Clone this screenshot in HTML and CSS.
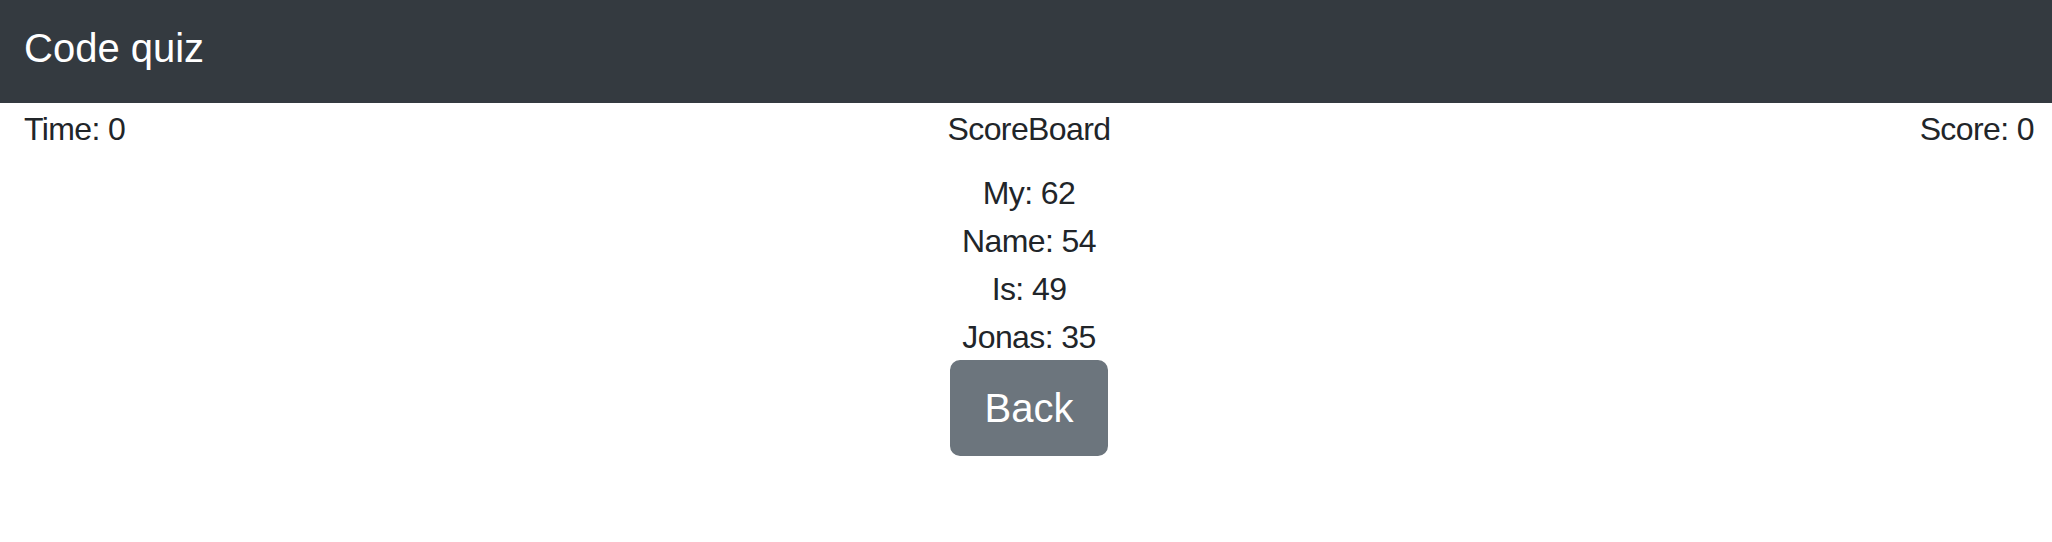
FILE: index.html
```html
<!DOCTYPE html>
<html lang="en">
<head>
<meta charset="utf-8">
<title>Code quiz</title>
<link rel="stylesheet" href="styles.css">
</head>
<body>
<header class="navbar">
  <span class="brand">Code quiz</span>
</header>
<main class="main">
  <div class="status-row">
    <div class="status-left">Time: 0</div>
    <div class="status-center">ScoreBoard</div>
    <div class="status-right">Score: 0</div>
  </div>
  <ul class="scores">
    <li>My: 62</li>
    <li>Name: 54</li>
    <li>Is: 49</li>
    <li>Jonas: 35</li>
  </ul>
  <div class="actions">
    <button class="btn-back" type="button">Back</button>
  </div>
</main>
</body>
</html>
```
FILE: styles.css
```css
* { box-sizing: border-box; }
html, body {
  margin: 0;
  padding: 0;
  background: #ffffff;
}
body {
  font-family: "Liberation Sans", Arial, Helvetica, sans-serif;
  font-size: 32px;
  line-height: 48px;
  color: #212529;
}
.navbar {
  background: #343a40;
  height: 103px;
  padding: 18px 24px 25px;
}
.brand {
  display: block;
  color: #ffffff;
  font-size: 40px;
  line-height: 60px;
}
.main {
  padding: 2px 18px 0 24px;
  letter-spacing: -0.6px;
}
.status-row {
  display: grid;
  grid-template-columns: 1fr auto 1fr;
  align-items: start;
}
.status-left { justify-self: start; }
.status-center { justify-self: center; }
.status-right { justify-self: end; }
.scores {
  list-style: none;
  margin: 16px 0 0;
  padding: 0;
  text-align: center;
}
.actions {
  display: flex;
  justify-content: center;
}
.btn-back {
  font-family: "Liberation Sans", Arial, Helvetica, sans-serif;
  font-size: 40px;
  line-height: 60px;
  letter-spacing: 0;
  color: #ffffff;
  background: #6c757d;
  border: 2px solid #6c757d;
  border-radius: 10px;
  padding: 16px 32px;
  margin-top: -1px;
  width: 158px;
  cursor: pointer;
}
```
